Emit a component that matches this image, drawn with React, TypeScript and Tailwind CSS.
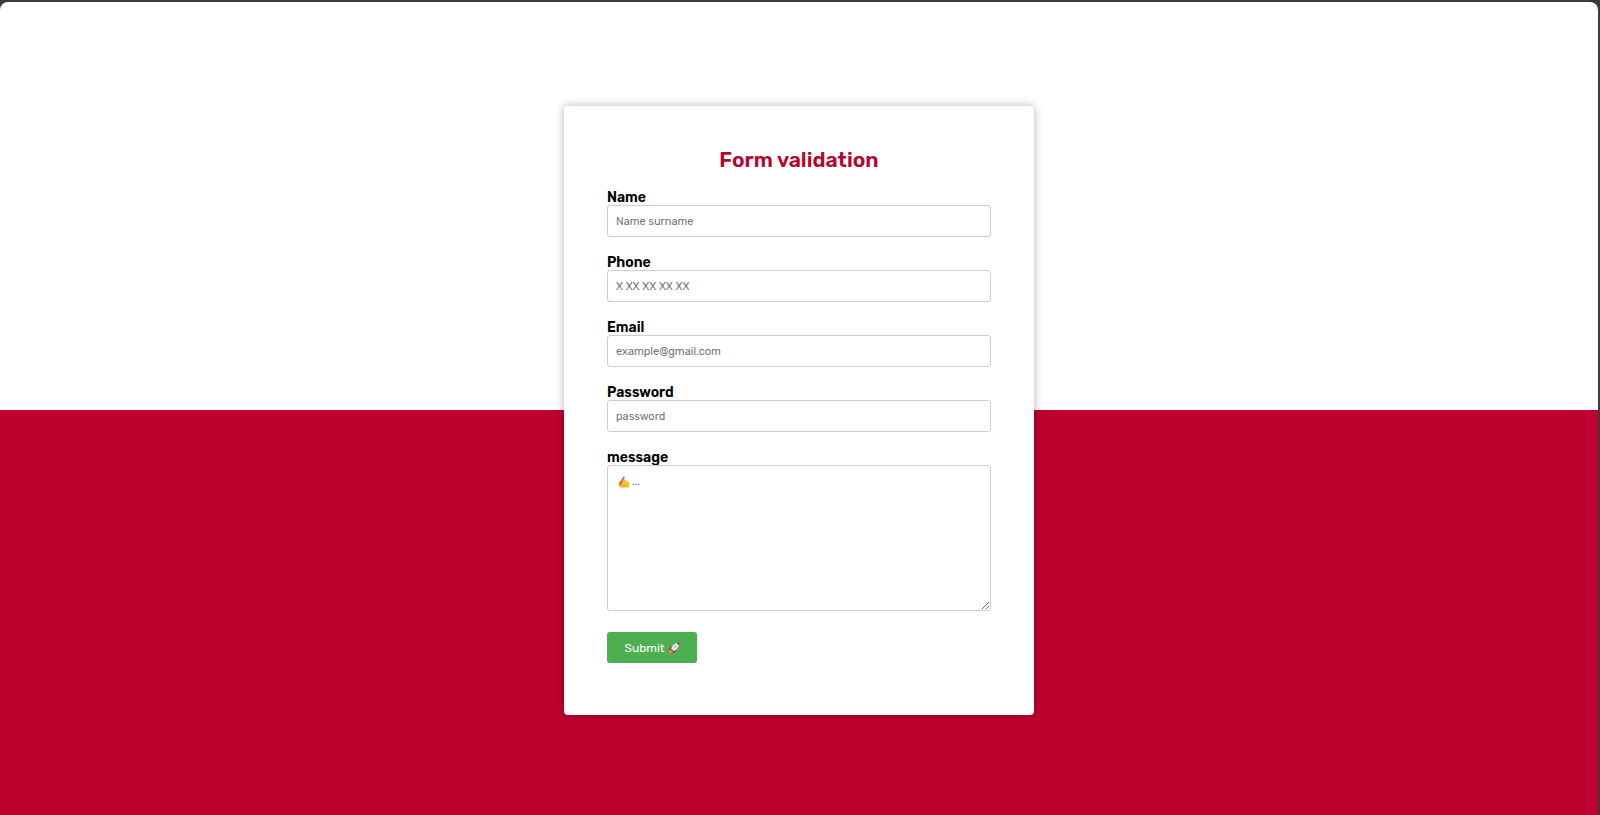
import { useId } from "react";

function Field({ label, type, placeholder }: { label: string; type: string; placeholder: string }) {
  const id = useId();
  return (
    <div className="flex flex-col">
      <label htmlFor={id} className="text-sm leading-[14px] font-semibold">
        {label}
      </label>
      <input
        id={id}
        type={type}
        placeholder={placeholder}
        className="h-8 w-full rounded-[3px] border border-[#ccc] bg-white px-2 pt-px text-[11px] outline-none placeholder:text-[#757575]"
      />
    </div>
  );
}

function WritingHand({ className }: { className: string }) {
  return (
    <svg viewBox="0 0 24 24" className={className} aria-hidden="true">
      <path
        d="M1 14c1-3 4-5 8-5l6-2c2 0 2 2 1 4h3c3 0 4 3 4 6v3c0 2-2 3-5 3H5c-2 0-3-2-2-2-2-1-2-3-1-3-1-1-2-3-1-4z"
        fill="#fcb92c"
      />
      <path d="M7 18h6M6 21h8" stroke="#ee9a22" strokeWidth="1" fill="none" />
      <path d="M11 1l3 1-7 13-4 4 1-6z" fill="#e0563c" />
      <path d="M4 14l3 2-4 3z" fill="#a85a32" />
      <path d="M8 12c4-3 8-1 7 1s-3 3-7 3" fill="#fdc648" />
    </svg>
  );
}

function Rocket({ className }: { className: string }) {
  return (
    <svg viewBox="0 0 24 24" className={className} aria-hidden="true">
      <path d="M7 15l3 3-3 4-6 1 1-5z" fill="#f28a2e" />
      <path d="M10 8l-5 1-4 6 6 1zM16 14l-1 5-6 4 1-6z" fill="#c8173f" />
      <path d="M5 15C7 8 13 2 21 1l2 2c-1 8-7 14-14 16z" fill="#e4e3ea" />
      <path d="M17 2c2-1 4-1 5-1l1 1c0 2 0 4-1 5z" fill="#d91c45" />
      <path d="M5 15l4 4 2-1-5-5z" fill="#b51238" />
      <circle cx="14.5" cy="9.5" r="1.8" fill="#a9b1c0" />
    </svg>
  );
}

export default function App() {
  return (
    <div className="flex min-h-screen flex-col bg-[#3d3a3b] pt-0.5 pr-0.5 font-['Rubik','Inter',sans-serif] text-black">
      <main className="flex grow items-center justify-center rounded-t-lg bg-[linear-gradient(#fff_calc(50%+2px),#be002f_calc(50%+2px))] pt-1">
        <form
          className="flex w-full max-w-[470px] flex-col rounded bg-white px-[43px] pt-[42px] pb-[52px] shadow-[0_0_10px_rgba(0,0,0,0.3)]"
          onSubmit={(event) => event.preventDefault()}
        >
          <h1 className="mb-[19px] text-center text-[21px] leading-6 font-semibold text-[#b5062f]">Form validation</h1>
          <div className="flex flex-col gap-[19px]">
            <Field label="Name" type="text" placeholder="Name surname" />
            <Field label="Phone" type="tel" placeholder="X XX XX XX XX" />
            <Field label="Email" type="email" placeholder="example@gmail.com" />
            <Field label="Password" type="password" placeholder="password" />
            <div className="flex flex-col">
              <label htmlFor="message" className="text-sm leading-[14px] font-semibold">
                message
              </label>
              <div className="relative flex">
                <textarea
                  id="message"
                  placeholder="..."
                  className="peer h-[146px] w-full resize rounded-[3px] border border-[#ccc] bg-white px-2 py-2 text-[11px] leading-4 outline-none placeholder:indent-4 placeholder:text-[#757575]"
                />
                <WritingHand className="pointer-events-none absolute top-[11px] left-[11px] hidden size-3 peer-placeholder-shown:block" />
              </div>
            </div>
          </div>
          <button
            type="submit"
            className="mt-[21px] flex h-[31px] w-[90px] items-center justify-center gap-[3px] rounded-[3px] bg-[#4caf50] text-xs text-white"
          >
            Submit
            <Rocket className="size-3" />
          </button>
        </form>
      </main>
    </div>
  );
}
